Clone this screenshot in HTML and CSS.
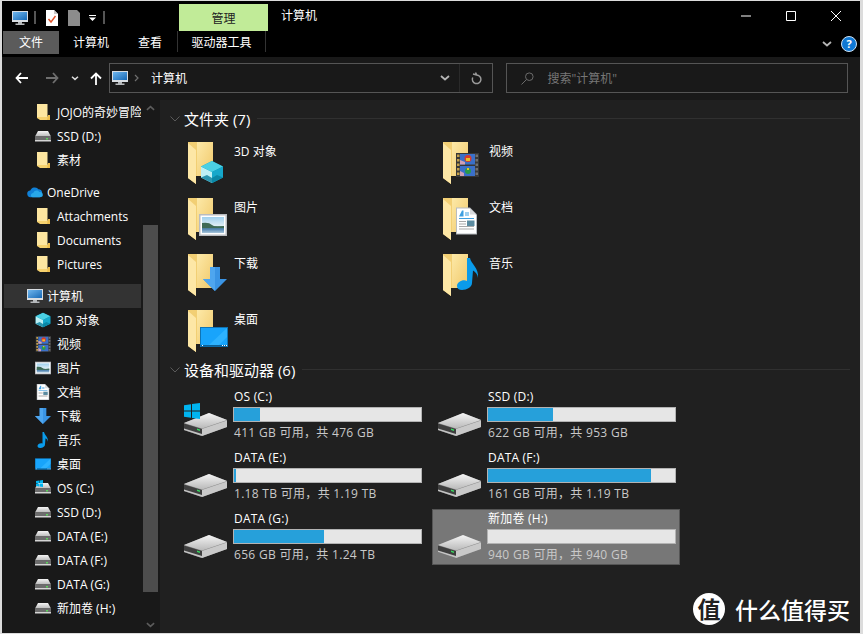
FILE: index.html
```html
<!DOCTYPE html>
<html lang="zh-CN">
<head>
  <meta charset="UTF-8">
  <meta name="viewport" content="width=device-width, initial-scale=1.0">
  <title>计算机</title>
  <link rel="stylesheet" href="styles.css">
</head>
<body>
  <svg class="defs" width="0" height="0" aria-hidden="true">
    <defs>
      <linearGradient id="fold" x1="0" y1="0" x2="1" y2="1">
        <stop offset="0" stop-color="#fde9a8"/>
        <stop offset="1" stop-color="#f0c869"/>
      </linearGradient>
      <linearGradient id="screen" x1="0" y1="0" x2="1" y2="1">
        <stop offset="0" stop-color="#6fb6ee"/>
        <stop offset="1" stop-color="#1668b5"/>
      </linearGradient>
      <linearGradient id="disk" x1="0" y1="0" x2="0" y2="1">
        <stop offset="0" stop-color="#f4f4f4"/>
        <stop offset="1" stop-color="#b9b9b9"/>
      </linearGradient>
      <linearGradient id="sky" x1="0" y1="0" x2="0" y2="1">
        <stop offset="0" stop-color="#9fd0ee"/>
        <stop offset=".55" stop-color="#dfeef5"/>
        <stop offset=".6" stop-color="#4a7a68"/>
        <stop offset=".75" stop-color="#4f82b0"/>
        <stop offset="1" stop-color="#a9c6da"/>
      </linearGradient>

      <!-- 小图标 16x16 -->
      <symbol id="i-folder" viewBox="0 0 16 16">
        <path d="M2 0h10v12.500h3V16H5L2 14z" fill="#f6d26f"/>
        <path d="M2 0h10.500v13H2z" fill="#fde6a0"/>
        <path d="M13 11h2v5h-3z" fill="#eebf4f"/>
      </symbol>
      <symbol id="i-drive" viewBox="0 0 16 16">
        <path d="M3 3h10l3 5.500H0z" fill="url(#disk)"/>
        <path d="M0 8.500h16V13H0z" fill="#6d6d6d"/>
        <path d="M0 12h16v1.500H0z" fill="#d5d5d5"/>
        <path d="M11 10h2v1.500h-2z" fill="#5dd35d"/>
      </symbol>
      <symbol id="i-pc" viewBox="0 0 16 16">
        <path d="M0 1h16v11H0z" fill="#d8dde2"/>
        <path d="M1 2h14v8H1z" fill="url(#screen)"/>
        <path d="M6 12h4v1.500h2.500V15h-9v-1.500H6z" fill="#b5b8bb"/>
      </symbol>
      <symbol id="i-cube" viewBox="0 0 24 24">
        <path d="M12 1l11 5.500v11L12 23 1 17.500v-11z" fill="#0f93b3"/>
        <path d="M1 6.500L12 12v11L1 17.500z" fill="#bdf0f5"/>
        <path d="M12 1l11 5.500L12 12 1 6.500z" fill="#4bd0e4"/>
        <path d="M12 12l11-5.500v11L12 23z" fill="#16a8cb"/>
        <path d="M1 17.500L7 15l5 3v5zM23 17.500L17 15l-5 3v5z" fill="#08809e" opacity=".8"/>
      </symbol>
      <symbol id="i-film" viewBox="0 0 24 24">
        <path d="M1 0h23v24H1z" fill="#383838"/>
        <path d="M2 1.500h2.500v2.500H2zM2 6h2.500v2.500H2zM2 10.500h2.500V13H2zM2 15h2.500v2.500H2zM2 19.500h2.500V22H2z" fill="#c4a04a"/>
        <path d="M20.500 1.500H23v2.500h-2.500zM20.500 6H23v2.500h-2.500zM20.500 10.500H23V13h-2.500zM20.500 15H23v2.500h-2.500zM20.500 19.500H23V22h-2.500z" fill="#707070"/>
        <path d="M5 1h15v10.500H5zM5 13h15v10H5z" fill="#3b70c9"/>
        <circle cx="13" cy="5.500" r="3.500" fill="#d83c2e"/>
        <path d="M11 5h4v3h-4z" fill="#e6c12a"/>
        <circle cx="13" cy="18" r="3" fill="#2a9a4a"/>
        <path d="M12 15h2v2h-2z" fill="#e6c12a"/>
        <path d="M5 7l5 2v2.500H5zM5 18l4 2v3H5z" fill="#d1a0b5"/>
      </symbol>
      <symbol id="i-pic" viewBox="0 0 28 22">
        <path d="M0 0h28v22H0z" fill="#b9bcc0"/>
        <path d="M1.500 1.500h25v19h-25z" fill="#fff"/>
        <path d="M3 3h22v16H3z" fill="url(#sky)"/>
        <path d="M3 9q7-1 10 2t12 1v2H3z" fill="#3e6a56"/>
      </symbol>
      <symbol id="i-doc" viewBox="0 0 21 27">
        <path d="M0 0h14l7 7v20H0z" fill="#b8bcc0"/>
        <path d="M1 1h12.500L20 7.500V26H1z" fill="#fff"/>
        <path d="M14 1l6 6h-6z" fill="#d8dadc"/>
        <path d="M3 9l3-6h1.500v6zM9 5h4v1H9zM9 7h4v1H9z" fill="#3f9fe0"/>
        <path d="M3 10.500h15v1H3z" fill="#3f9fe0"/>
        <path d="M3 13.500h7v1H3zM3 16h7v1H3zM3 18.500h15v1H3zM3 21h15v1H3z" fill="#a9a9a9"/>
        <path d="M11 13h7.500v5.500H11z" fill="#5b8ba0"/>
      </symbol>
      <symbol id="i-down" viewBox="0 0 24 24">
        <path d="M7 0h10v12h7L12 24 0 12h7z" fill="#3a94e4"/>
        <path d="M7 0h5v24L0 12h7z" fill="#4ea6ef"/>
      </symbol>
      <symbol id="i-note" viewBox="0 0 22 32">
        <path d="M10 0h3c1 6 9 10 8 20-.3-3-2-6-5-7.500L15 25c0 4-5 7-10 7-3 0-5-1.500-5-4 0-4 6-7 10-5z" fill="#0a9bea"/>
      </symbol>
      <symbol id="i-desk" viewBox="0 0 28 20">
        <path d="M0 0h28v20H0z" fill="#0f74b5"/>
        <path d="M1 1h26v17H1z" fill="#18a4fb"/>
        <path d="M27 1v9l-8 8H9z" fill="#2db2ff"/>
        <path d="M1 18h26v1.500H1z" fill="#0b5f95"/>
        <path d="M2 18h1v1H2zM22 18h1v1h-1zM24 18h1v1h-1zM26 18h1v1h-1z" fill="#fff"/>
      </symbol>
      <symbol id="i-cloud" viewBox="0 0 17 12">
        <path d="M4 11.500a3.500 3.500 0 0 1-.5-7A5 5 0 0 1 12 3a3.600 3.600 0 0 1 4 3.500c1 3-1 5-3 5z" fill="#1081d8"/>
        <path d="M6 11.500c-2.500 0-2.500-4 .5-4.500 1.500-3 5-3.500 6.500-1 2.500-.5 4 1.500 3.800 3.500-.2 1.500-1.500 2-3 2z" fill="#28a8ea"/>
      </symbol>
      <symbol id="i-win" viewBox="0 0 16 16">
        <path d="M0 2.300l7-1v6.300H0zM8 1.100l8-1.100v7.600H8zM0 8.500h7v6.300l-7-1zM8 8.500h8V16l-8-1.100z" fill="#00b4f0"/>
      </symbol>

      <!-- 大图标 -->
      <symbol id="i-bigfolder" viewBox="0 0 40 42">
        <path d="M0 0h25v34H8v8L0 36z" fill="#f2cf74"/>
        <path d="M9 0h16v34H9z" fill="url(#fold)"/>
        <path d="M0 1l8 7v34l-8-6z" fill="#fde7a6"/>
      </symbol>
      <symbol id="i-bigdrive" viewBox="0 0 43 23">
        <path d="M0 10L25 0l18 7v7L18 23 0 17z" fill="#8b8b8b"/>
        <path d="M0 10L25 0l18 7-25 8.500z" fill="url(#disk)"/>
        <path d="M0 10.500l18 5.500v7L0 17z" fill="#3f3f3f"/>
        <path d="M18 16l25-8.500V14L18 23z" fill="#c9c9c9"/>
        <path d="M0 15.500l18 5.500v2L0 17z" fill="#c4c4c4"/>
        <path d="M13 15.500l3 1v1.500l-3-1z" fill="#38d860"/>
      </symbol>
    </defs>
  </svg>

  <div class="window">
    <header class="ribbon">
      <div class="title-row">
        <div class="qat">
          <svg class="ico16"><use href="#i-pc"/></svg>
          <span class="qat-sep"></span>
          <svg class="qat-doc" viewBox="0 0 12 16">
            <path d="M0 0h8l4 4v12H0z" fill="#fff"/>
            <path d="M8 0l4 4H8z" fill="#c8c8c8"/>
            <path d="M2.500 9l2.500 3 4.500-6" fill="none" stroke="#e0532b" stroke-width="1.400"/>
          </svg>
          <svg class="qat-doc" viewBox="0 0 12 16">
            <path d="M0 0h9l3 3v13H0z" fill="#8c8c8c"/>
          </svg>
          <svg class="qat-more" viewBox="0 0 7 6">
            <path d="M0 0h7v1H0zM0 2.500h7L3.500 6z" fill="#fff"/>
          </svg>
          <span class="qat-sep"></span>
        </div>
        <div class="ctx-tab">管理</div>
        <div class="win-title">计算机</div>
        <div class="win-btns">
          <svg viewBox="0 0 10 10"><path d="M0 5h10" stroke="#fff"/></svg>
          <svg viewBox="0 0 10 10"><path d="M.5.500h9v9h-9z" fill="none" stroke="#fff"/></svg>
          <svg viewBox="0 0 10 10"><path d="M0 0l10 10M10 0L0 10" stroke="#fff"/></svg>
        </div>
      </div>
      <div class="tab-row">
        <div class="tab tab-file">文件</div>
        <div class="tab tab-a">计算机</div>
        <div class="tab tab-b">查看</div>
        <div class="tab tab-ctx">驱动器工具</div>
        <svg class="rib-chev" viewBox="0 0 10 6"><path d="M1 1l4 3.500L9 1" fill="none" stroke="#b5b5b5" stroke-width="1.800"/></svg>
        <div class="help">?</div>
      </div>
    </header>

    <div class="toolbar">
      <svg class="nav nav-back" viewBox="0 0 13 12"><path d="M6 1L1.500 6 6 11M2 6h11" fill="none" stroke="#fff" stroke-width="1.800"/></svg>
      <svg class="nav nav-fwd" viewBox="0 0 13 12"><path d="M7 1l4.500 5L7 11M11 6H0" fill="none" stroke="#6f6f6f" stroke-width="1.800"/></svg>
      <svg class="nav-drop" viewBox="0 0 8 5"><path d="M1 .8l3 2.600L7 .8" fill="none" stroke="#ddd" stroke-width="1.500"/></svg>
      <svg class="nav nav-up" viewBox="0 0 12 13"><path d="M1 6.500L6 1.500l5 5M6 2v11" fill="none" stroke="#fff" stroke-width="1.800"/></svg>
      <div class="addr">
        <svg class="ico16"><use href="#i-pc"/></svg>
        <svg class="crumb" viewBox="0 0 5 8"><path d="M1 1l3 3-3 3" fill="none" stroke="#6f6f6f" stroke-width="1.200"/></svg>
        <span class="addr-text">计算机</span>
        <svg class="addr-drop" viewBox="0 0 10 6"><path d="M1 1l4 3.500L9 1" fill="none" stroke="#b5b5b5" stroke-width="1.800"/></svg>
        <span class="addr-sep"></span>
        <svg class="addr-refresh" viewBox="0 0 12 13"><path d="M6.500 2.500a4.300 4.300 0 1 1-3.800 2.500M3 1.500l3.800 1L5.500 0" fill="none" stroke="#9a9a9a" stroke-width="1.500" transform="translate(0 .5)"/></svg>
      </div>
      <div class="search">
        <svg class="search-ico" viewBox="0 0 13 13"><circle cx="8.300" cy="4.700" r="3.800" fill="none" stroke="#6b6b6b"/><path d="M5.500 7.500L.5 12.500" stroke="#6b6b6b"/></svg>
        <span>搜索"计算机"</span>
      </div>
    </div>

    <div class="body">
      <nav class="side">
        <div class="tree">
          <div class="row lv2"><svg class="ico16"><use href="#i-folder"/></svg><span>JOJO的奇妙冒险</span></div>
          <div class="row lv2"><svg class="ico16"><use href="#i-drive"/></svg><span>SSD (D:)</span></div>
          <div class="row lv2 group-end"><svg class="ico16"><use href="#i-folder"/></svg><span>素材</span></div>
          <div class="row lv1"><svg class="ico-cloud"><use href="#i-cloud"/></svg><span>OneDrive</span></div>
          <div class="row lv2"><svg class="ico16"><use href="#i-folder"/></svg><span>Attachments</span></div>
          <div class="row lv2"><svg class="ico16"><use href="#i-folder"/></svg><span>Documents</span></div>
          <div class="row lv2 group-end"><svg class="ico16"><use href="#i-folder"/></svg><span>Pictures</span></div>
          <div class="row lv1 current"><svg class="ico16"><use href="#i-pc"/></svg><span>计算机</span></div>
          <div class="row lv2"><svg class="ico16"><use href="#i-cube"/></svg><span>3D 对象</span></div>
          <div class="row lv2"><svg class="ico16"><use href="#i-film"/></svg><span>视频</span></div>
          <div class="row lv2"><svg class="ico16"><use href="#i-pic"/></svg><span>图片</span></div>
          <div class="row lv2"><svg class="ico16"><use href="#i-doc"/></svg><span>文档</span></div>
          <div class="row lv2"><svg class="ico16"><use href="#i-down"/></svg><span>下载</span></div>
          <div class="row lv2"><svg class="ico16"><use href="#i-note"/></svg><span>音乐</span></div>
          <div class="row lv2"><svg class="ico16"><use href="#i-desk"/></svg><span>桌面</span></div>
          <div class="row lv2 os"><svg class="ico16"><use href="#i-drive"/></svg><svg class="os-win"><use href="#i-win"/></svg><span>OS (C:)</span></div>
          <div class="row lv2"><svg class="ico16"><use href="#i-drive"/></svg><span>SSD (D:)</span></div>
          <div class="row lv2"><svg class="ico16"><use href="#i-drive"/></svg><span>DATA (E:)</span></div>
          <div class="row lv2"><svg class="ico16"><use href="#i-drive"/></svg><span>DATA (F:)</span></div>
          <div class="row lv2"><svg class="ico16"><use href="#i-drive"/></svg><span>DATA (G:)</span></div>
          <div class="row lv2"><svg class="ico16"><use href="#i-drive"/></svg><span>新加卷 (H:)</span></div>
        </div>
        <div class="scroll">
          <svg viewBox="0 0 10 6"><path d="M1 5l4-3.500L9 5" fill="none" stroke="#5c5c5c" stroke-width="1.800"/></svg>
          <div class="track"><div class="thumb"></div></div>
          <svg viewBox="0 0 10 6"><path d="M1 1l4 3.500L9 1" fill="none" stroke="#5c5c5c" stroke-width="1.800"/></svg>
        </div>
      </nav>

      <main class="content">
        <div class="group-head">
          <svg viewBox="0 0 10 6"><path d="M.5.500L5 5 9.500.5" fill="none" stroke="#5a5a5a"/></svg>
          <span>文件夹 (7)</span>
          <i></i>
        </div>
        <div class="folders">
          <div class="folder"><div class="f-ico"><svg class="f-base"><use href="#i-bigfolder"/></svg><svg class="f-over over-cube"><use href="#i-cube"/></svg></div><span>3D 对象</span></div>
          <div class="folder"><div class="f-ico"><svg class="f-base"><use href="#i-bigfolder"/></svg><svg class="f-over over-film"><use href="#i-film"/></svg></div><span>视频</span></div>
          <div class="folder"><div class="f-ico"><svg class="f-base"><use href="#i-bigfolder"/></svg><svg class="f-over over-pic"><use href="#i-pic"/></svg></div><span>图片</span></div>
          <div class="folder"><div class="f-ico"><svg class="f-base"><use href="#i-bigfolder"/></svg><svg class="f-over over-doc"><use href="#i-doc"/></svg></div><span>文档</span></div>
          <div class="folder"><div class="f-ico"><svg class="f-base"><use href="#i-bigfolder"/></svg><svg class="f-over over-down"><use href="#i-down"/></svg></div><span>下载</span></div>
          <div class="folder"><div class="f-ico"><svg class="f-base"><use href="#i-bigfolder"/></svg><svg class="f-over over-note"><use href="#i-note"/></svg></div><span>音乐</span></div>
          <div class="folder"><div class="f-ico"><svg class="f-base"><use href="#i-bigfolder"/></svg><svg class="f-over over-desk"><use href="#i-desk"/></svg></div><span>桌面</span></div>
        </div>

        <div class="group-head group-drives">
          <svg viewBox="0 0 10 6"><path d="M.5.500L5 5 9.500.5" fill="none" stroke="#5a5a5a"/></svg>
          <span>设备和驱动器 (6)</span>
          <i></i>
        </div>
        <div class="drives">
          <div class="drive">
            <div class="d-ico"><svg class="d-disk"><use href="#i-bigdrive"/></svg><svg class="d-win"><use href="#i-win"/></svg></div>
            <div class="d-info"><div class="d-name">OS (C:)</div><div class="bar"><div class="fill" style="width: 14%"></div></div><div class="d-free">411 GB 可用，共 476 GB</div></div>
          </div>
          <div class="drive">
            <div class="d-ico"><svg class="d-disk"><use href="#i-bigdrive"/></svg></div>
            <div class="d-info"><div class="d-name">SSD (D:)</div><div class="bar"><div class="fill" style="width: 35%"></div></div><div class="d-free">622 GB 可用，共 953 GB</div></div>
          </div>
          <div class="drive">
            <div class="d-ico"><svg class="d-disk"><use href="#i-bigdrive"/></svg></div>
            <div class="d-info"><div class="d-name">DATA (E:)</div><div class="bar"><div class="fill" style="width: 1%"></div></div><div class="d-free">1.18 TB 可用，共 1.19 TB</div></div>
          </div>
          <div class="drive">
            <div class="d-ico"><svg class="d-disk"><use href="#i-bigdrive"/></svg></div>
            <div class="d-info"><div class="d-name">DATA (F:)</div><div class="bar"><div class="fill" style="width: 87%"></div></div><div class="d-free">161 GB 可用，共 1.19 TB</div></div>
          </div>
          <div class="drive">
            <div class="d-ico"><svg class="d-disk"><use href="#i-bigdrive"/></svg></div>
            <div class="d-info"><div class="d-name">DATA (G:)</div><div class="bar"><div class="fill" style="width: 48%"></div></div><div class="d-free">656 GB 可用，共 1.24 TB</div></div>
          </div>
          <div class="drive selected">
            <div class="d-ico"><svg class="d-disk"><use href="#i-bigdrive"/></svg></div>
            <div class="d-info"><div class="d-name">新加卷 (H:)</div><div class="bar"></div><div class="d-free">940 GB 可用，共 940 GB</div></div>
          </div>
        </div>
      </main>
    </div>

    <div class="watermark">
      <div class="wm-logo">值</div>
      <div class="wm-text">什么值得买</div>
    </div>
  </div>
</body>
</html>
```

FILE: styles.css
```css
* {
  box-sizing: border-box;
}
html, body {
  height: 100%;
}
body {
  margin: 0;
  overflow: hidden;
  background-color: #dcdcdc;
  font-family: "Open Sans", "Noto Sans CJK SC", sans-serif;
  font-size: 12px;
  color: #fff;
}
svg {
  display: block;
  flex: none;
}
.defs {
  position: absolute;
}
.window {
  position: relative;
  width: 858px;
  height: 632px;
  margin: 1px 0 0 2px;
  display: flex;
  flex-direction: column;
  background-color: #000;
}

/* ribbon */
.ribbon {
  height: 56px;
  flex: none;
  background-color: #000;
}
.title-row {
  height: 30px;
  padding-top: 3px;
  display: flex;
}
.qat {
  width: 177px;
  padding: 0 0 0 10px;
  display: flex;
  align-items: center;
}
.qat-sep {
  width: 2px;
  height: 13px;
  margin: 0 0 0 6px;
  background-color: #555;
}
.qat-doc {
  width: 12px;
  height: 16px;
  margin-left: 10px;
}
.qat-more {
  width: 7px;
  height: 6px;
  margin-left: 9px;
}
.qat-more + .qat-sep {
  margin-left: 7px;
}
.ctx-tab {
  width: 89px;
  display: flex;
  align-items: center;
  justify-content: center;
  background-color: #c1eb98;
  color: #222;
}
.win-title {
  margin-left: 13px;
  line-height: 24px;
}
.win-btns {
  margin-left: auto;
  padding: 7px 19px 0 0;
  display: flex;
  gap: 35px;
}
.win-btns svg {
  width: 10px;
  height: 10px;
}
.tab-row {
  height: 23px;
  display: flex;
  align-items: flex-start;
}
.tab {
  height: 23px;
  line-height: 24px;
  text-align: center;
}
.tab-file {
  width: 56px;
  margin-left: 1px;
  background-color: #5b5b5b;
}
.tab-a {
  margin-left: 14px;
}
.tab-b {
  margin-left: 29px;
}
.tab-ctx {
  width: 89px;
  height: 21px;
  margin-left: 15px;
  border-left: 1px solid #333;
  border-right: 1px solid #333;
}
.rib-chev {
  width: 10px;
  height: 6px;
  margin: 10px 0 0 auto;
}
.help {
  width: 16px;
  height: 16px;
  margin: 5px 3px 0 9px;
  border-radius: 50%;
  border: 1px solid #cfe3f5;
  background-color: #0f78d4;
  text-align: center;
  font-size: 11px;
  font-weight: bold;
  line-height: 14px;
}

/* nav bar */
.toolbar {
  height: 43px;
  flex: none;
  padding: 6px 12px 7px 13px;
  display: flex;
  align-items: center;
  background-color: #191919;
}
.nav {
  width: 13px;
  height: 12px;
}
.nav-fwd {
  margin-left: 18px;
}
.nav-drop {
  width: 8px;
  height: 5px;
  margin-left: 12px;
}
.nav-up {
  margin-left: 11px;
  width: 12px;
  height: 13px;
}
.addr {
  width: 385px;
  height: 30px;
  margin-left: 7px;
  padding: 0 0 0 2px;
  display: flex;
  align-items: center;
  border: 1px solid #555;
}
.ico16 {
  width: 16px;
  height: 16px;
}
.ico-cloud {
  width: 16px;
  height: 12px;
}
.crumb {
  width: 5px;
  height: 8px;
  margin-left: 6px;
}
.addr-text {
  margin-left: 12px;
}
.addr-drop {
  width: 10px;
  height: 6px;
  margin-left: auto;
}
.addr-sep {
  width: 1px;
  height: 28px;
  margin-left: 9px;
  background-color: #2a2a2a;
}
.addr-refresh {
  width: 12px;
  height: 13px;
  margin: 0 10px 0 10px;
}
.search {
  width: 342px;
  height: 30px;
  margin-left: 13px;
  padding-left: 14px;
  display: flex;
  align-items: center;
  gap: 13px;
  border: 1px solid #555;
  color: #767676;
}
.search-ico {
  width: 13px;
  height: 13px;
}

/* body */
.body {
  flex: 1;
  min-height: 0;
  display: flex;
}
.side {
  width: 158px;
  flex: none;
  padding-right: 2px;
  display: flex;
  background-color: #191919;
  overflow: hidden;
}
.tree {
  width: 139px;
  flex: none;
  padding: 0 0 0 2px;
}
.row {
  height: 24px;
  display: flex;
  align-items: center;
  position: relative;
  white-space: nowrap;
  overflow: hidden;
}
.row span {
  margin-left: 6px;
}
.lv1 {
  padding-left: 23px;
}
.lv1 span {
  margin-left: 4px;
}
.lv2 {
  padding-left: 31px;
}
.group-end {
  margin-bottom: 8px;
}
.current {
  background-color: #333;
}
.os-win {
  position: absolute;
  left: 32px;
  top: 4px;
  width: 7px;
  height: 7px;
}
.scroll {
  flex: 1;
  padding: 5px 0 5px;
  display: flex;
  flex-direction: column;
  align-items: center;
  margin-left: 2px;
}
.scroll > svg {
  width: 9px;
  height: 6px;
}
.track {
  flex: 1;
  width: 100%;
  padding: 114px 0 30px;
}
.thumb {
  height: 100%;
  background-color: #4d4d4d;
}

/* content */
.content {
  flex: 1;
  min-width: 0;
  padding: 10px 0 0 9px;
  background-color: #202020;
}
.group-head {
  height: 17px;
  padding-right: 10px;
  display: flex;
  align-items: center;
  font-size: 15px;
}
.group-head svg {
  width: 10px;
  height: 6px;
  margin: 0 4px 0 1px;
}
.group-head i {
  flex: 1;
  height: 1px;
  margin-left: 7px;
  background-color: #303030;
}
.folders {
  padding: 8px 0 0 9px;
  display: grid;
  grid-template-columns: repeat(2, 255px);
  grid-auto-rows: 56px;
}
.folder {
  display: flex;
  align-items: flex-start;
  padding: 7px 0 0 10px;
  gap: 6px;
}
.folder > span {
  margin-top: 1px;
  line-height: 18px;
}
.f-ico {
  position: relative;
  width: 40px;
  height: 42px;
  flex: none;
}
.f-base {
  width: 40px;
  height: 42px;
}
.f-over {
  position: absolute;
}
.over-cube {
  left: 12px;
  top: 18px;
  width: 24px;
  height: 24px;
}
.over-film {
  left: 12px;
  top: 9px;
  width: 24px;
  height: 28px;
}
.over-pic {
  left: 11px;
  top: 16px;
  width: 28px;
  height: 22px;
}
.over-doc {
  left: 13px;
  top: 9px;
  width: 21px;
  height: 28px;
}
.over-down {
  left: 15px;
  top: 13px;
  width: 24px;
  height: 24px;
}
.over-note {
  left: 14px;
  top: 4px;
  width: 22px;
  height: 32px;
}
.over-desk {
  left: 12px;
  top: 17px;
  width: 28px;
  height: 20px;
}
.group-drives {
  margin-top: 2px;
}
.drives {
  padding: 9px 0 0 9px;
  display: grid;
  grid-template-columns: repeat(2, 248px);
  column-gap: 6px;
  grid-auto-rows: 56px;
  row-gap: 5px;
}
.drive {
  display: flex;
  padding: 0 3px 0 5px;
  gap: 6px;
  border: 1px solid transparent;
}
.d-ico {
  position: relative;
  width: 43px;
  flex: none;
}
.d-disk {
  position: absolute;
  left: 0;
  top: 25px;
  width: 43px;
  height: 23px;
}
.d-win {
  position: absolute;
  left: 0;
  top: 15px;
  width: 16px;
  height: 16px;
}
.d-info {
  flex: 1;
  min-width: 0;
}
.d-name {
  height: 17px;
  line-height: 17px;
  padding-left: 1px;
  letter-spacing: .2px;
}
.bar {
  height: 15px;
  margin-top: 2px;
  border: 1px solid #b3b3b3;
  background-color: #e6e6e6;
}
.fill {
  height: 100%;
  background-color: #26a0da;
}
.d-free {
  margin-top: 2px;
  line-height: 17px;
  padding-left: 1px;
  letter-spacing: .3px;
  color: #c9c9c9;
}
.selected {
  background-color: #777;
  border-color: #555;
}

/* 水印 */
.watermark {
  position: absolute;
  left: 691px;
  top: 592px;
  display: flex;
  align-items: center;
  gap: 10px;
}
.wm-logo {
  width: 32px;
  height: 32px;
  border-radius: 50%;
  background-color: #fff;
  color: #222;
  text-align: center;
  font: bold 23px/31px "Noto Sans CJK SC", sans-serif;
}
.wm-text {
  font: 500 23px/32px "Noto Sans CJK SC", sans-serif;
  white-space: nowrap;
}
```
